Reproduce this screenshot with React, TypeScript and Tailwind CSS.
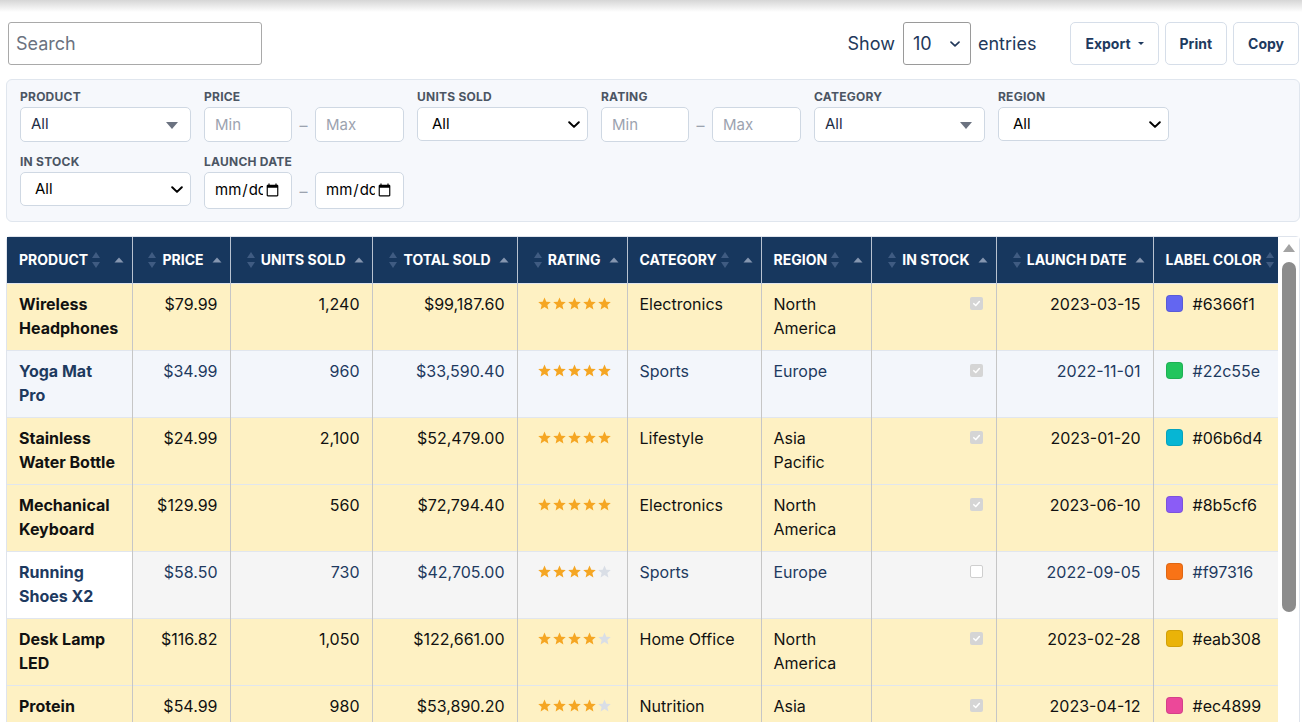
import { ReactNode } from 'react';

type Tone = 'yellow' | 'blue' | 'gray';

type Product = {
  name: string;
  price: string;
  units: string;
  total: string;
  rating: number;
  category: string;
  region: string;
  inStock: boolean;
  launch: string;
  color: string;
  tone: Tone;
};

const products: Product[] = [
  { name: 'Wireless Headphones', price: '$79.99', units: '1,240', total: '$99,187.60', rating: 5, category: 'Electronics', region: 'North America', inStock: true, launch: '2023-03-15', color: '#6366f1', tone: 'yellow' },
  { name: 'Yoga Mat Pro', price: '$34.99', units: '960', total: '$33,590.40', rating: 5, category: 'Sports', region: 'Europe', inStock: true, launch: '2022-11-01', color: '#22c55e', tone: 'blue' },
  { name: 'Stainless Water Bottle', price: '$24.99', units: '2,100', total: '$52,479.00', rating: 5, category: 'Lifestyle', region: 'Asia Pacific', inStock: true, launch: '2023-01-20', color: '#06b6d4', tone: 'yellow' },
  { name: 'Mechanical Keyboard', price: '$129.99', units: '560', total: '$72,794.40', rating: 5, category: 'Electronics', region: 'North America', inStock: true, launch: '2023-06-10', color: '#8b5cf6', tone: 'yellow' },
  { name: 'Running Shoes X2', price: '$58.50', units: '730', total: '$42,705.00', rating: 4, category: 'Sports', region: 'Europe', inStock: false, launch: '2022-09-05', color: '#f97316', tone: 'gray' },
  { name: 'Desk Lamp LED', price: '$116.82', units: '1,050', total: '$122,661.00', rating: 4, category: 'Home Office', region: 'North America', inStock: true, launch: '2023-02-28', color: '#eab308', tone: 'yellow' },
  { name: 'Protein Powder', price: '$54.99', units: '980', total: '$53,890.20', rating: 4, category: 'Nutrition', region: 'Asia Pacific', inStock: true, launch: '2023-04-12', color: '#ec4899', tone: 'yellow' },
  { name: 'Smart Watch S', price: '$199.99', units: '450', total: '$89,995.50', rating: 4, category: 'Electronics', region: 'Europe', inStock: true, launch: '2023-05-22', color: '#0ea5e9', tone: 'yellow' },
  { name: 'Ceramic Mug Set', price: '$29.99', units: '1,500', total: '$44,985.00', rating: 4, category: 'Home Office', region: 'North America', inStock: false, launch: '2022-12-08', color: '#14b8a6', tone: 'gray' },
  { name: 'Trail Backpack', price: '$89.00', units: '620', total: '$55,180.00', rating: 5, category: 'Outdoors', region: 'Europe', inStock: true, launch: '2023-07-01', color: '#ef4444', tone: 'yellow' },
];

type Column = { label: string; width: string; align: 'left' | 'right' | 'center' };

const columns: Column[] = [
  { label: 'Product', width: 'w-[125px]', align: 'left' },
  { label: 'Price', width: 'w-[98px]', align: 'right' },
  { label: 'Units Sold', width: 'w-[142px]', align: 'right' },
  { label: 'Total Sold', width: 'w-[145px]', align: 'right' },
  { label: 'Rating', width: 'w-[110px]', align: 'center' },
  { label: 'Category', width: 'w-[134px]', align: 'left' },
  { label: 'Region', width: 'w-[110px]', align: 'left' },
  { label: 'In Stock', width: 'w-[125px]', align: 'right' },
  { label: 'Launch Date', width: 'w-[157px]', align: 'right' },
  { label: 'Label Color', width: 'w-[150px]', align: 'left' },
];

const SortBoth = ({ className = '' }: { className?: string }) => (
  <svg width="10" height="20" viewBox="0 0 10 20" className={`shrink-0 ${className}`}>
    <path d="M5 2 L9 8 H1 Z" fill="#3f5b82" />
    <path d="M1 12 H9 L5 18 Z" fill="#3f5b82" />
  </svg>
);

const SortUp = ({ className = '' }: { className?: string }) => (
  <svg width="10" height="6" viewBox="0 0 10 6" className={`shrink-0 ${className}`}>
    <path d="M5 0.5 L9.5 5.5 H0.5 Z" fill="#8596b0" />
  </svg>
);

const Star = ({ on }: { on: boolean }) => (
  <svg width="15" height="15" viewBox="0 0 24 24">
    <path
      d="M12 2.5l2.9 6.6 7.1.6-5.4 4.7 1.6 7-6.2-3.8-6.2 3.8 1.6-7L2 9.7l7.1-.6z"
      fill={on ? '#f5a623' : '#d9dee6'}
    />
  </svg>
);

const Chevron = ({ className = '', color = '#000', w = 12 }: { className?: string; color?: string; w?: number }) => (
  <svg width={w} height={w * 0.6} viewBox="0 0 12 7" className={`pointer-events-none absolute ${className}`}>
    <path d="M1.2 1.2 L6 5.8 L10.8 1.2" fill="none" stroke={color} strokeWidth="2" strokeLinecap="round" strokeLinejoin="round" />
  </svg>
);

const FieldLabel = ({ children }: { children: ReactNode }) => (
  <span className="text-[12px] font-bold uppercase leading-4 tracking-[0.02em] text-[#4b5563]">{children}</span>
);

const inputBox = 'h-[35px] rounded-[5px] border border-[#cfd8e3] bg-white text-[15px]';

const TriangleSelect = () => (
  <div className={`relative w-[171px] ${inputBox}`}>
    <select className="h-full w-full appearance-none bg-transparent pl-[10px] text-[#1e2d45] outline-none">
      <option>All</option>
    </select>
    <svg width="12" height="7" viewBox="0 0 12 7" className="pointer-events-none absolute right-[12px] top-[14px]">
      <path d="M0 0 H12 L6 7 Z" fill="#6b7280" />
    </svg>
  </div>
);

const NativeSelect = () => (
  <div className="relative h-[34px] w-[171px] rounded-[5px] border border-[#cfd8e3] bg-white">
    <select className="h-full w-full appearance-none bg-transparent px-[14px] text-[15px] text-black outline-none">
      <option>All</option>
    </select>
    <Chevron className="right-[7px] top-[13px]" />
  </div>
);

const Range = ({ type = 'text' }: { type?: 'text' | 'date' }) => (
  <div className="flex items-center gap-[6px]">
    {type === 'date' ? (
      <input type="date" className="h-[37px] w-[88px] rounded-[5px] border border-[#cfd8e3] bg-white px-[9px] text-[15px] text-black" />
    ) : (
      <input placeholder="Min" className={`w-[88px] px-[10px] placeholder:text-[#9ca3af] ${inputBox}`} />
    )}
    <span className="w-[11px] text-center text-[#9ca3af]">–</span>
    {type === 'date' ? (
      <input type="date" className="h-[37px] w-[89px] rounded-[5px] border border-[#cfd8e3] bg-white px-[9px] text-[15px] text-black" />
    ) : (
      <input placeholder="Max" className={`w-[89px] px-[10px] placeholder:text-[#9ca3af] ${inputBox}`} />
    )}
  </div>
);

const Field = ({ label, children }: { label: string; children: ReactNode }) => (
  <div className="flex flex-col gap-[2px]">
    <FieldLabel>{label}</FieldLabel>
    {children}
  </div>
);

const toneBg: Record<Tone, string> = {
  yellow: 'bg-[#fef1c3]',
  blue: 'bg-[#f3f6fb]',
  gray: 'bg-[#f5f5f5]',
};

const Check = ({ on }: { on: boolean }) =>
  on ? (
    <span className="inline-flex h-[13px] w-[13px] items-center justify-center rounded-[2px] bg-[#d5d5d5] align-middle">
      <svg width="9" height="9" viewBox="0 0 10 10">
        <path d="M2 5.2 L4.2 7.3 L8.2 2.8" fill="none" stroke="#fff" strokeWidth="1.7" strokeLinecap="round" strokeLinejoin="round" />
      </svg>
    </span>
  ) : (
    <span className="inline-block h-[13px] w-[13px] rounded-[2px] border border-[#cfcfcf] bg-white align-middle" />
  );

export default function App() {
  return (
    <div className="h-[722px] overflow-hidden bg-white font-['Inter',sans-serif]">
      <div className="h-[12px] bg-linear-to-b from-[#d6d6d6] to-white" />

      <div className="pl-[6px] pr-[2px]">
        {/* Toolbar */}
        <div className="ml-[2px] mr-[1px] mt-[10px] flex h-[43px] items-center">
          <input
            placeholder="Search"
            className="h-[43px] w-[254px] rounded-[3px] border border-[#a9a9a9] px-[7px] text-[18px] placeholder:text-[#6b7280]"
          />
          <div className="ml-auto flex items-center text-[18px] text-[#22385a]">
            <span>Show</span>
            <div className="relative ml-[8px] h-[43px] w-[68px] rounded-[3px] border border-[#9a9a9a] bg-white">
              <select className="h-full w-full appearance-none bg-transparent px-[9px] text-[18px] text-[#22385a] outline-none">
                <option>10</option>
              </select>
              <Chevron className="right-[10px] top-[18px]" color="#22385a" w={10} />
            </div>
            <span className="ml-[7px]">entries</span>
          </div>
          <div className="ml-[34px] flex gap-[6px] text-[14px] font-bold text-[#1e3a5f]">
            <button className="flex h-[43px] items-center gap-[7px] rounded-[5px] border border-[#d6dee9] bg-white px-[14px]">
              Export
              <svg width="6" height="3" viewBox="0 0 6 3">
                <path d="M0 0 H6 L3 3 Z" fill="#1e3a5f" />
              </svg>
            </button>
            <button className="h-[43px] rounded-[5px] border border-[#d6dee9] bg-white px-[14px]">Print</button>
            <button className="h-[43px] rounded-[5px] border border-[#d6dee9] bg-white px-[14px]">Copy</button>
          </div>
        </div>

        {/* Filters */}
        <div className="mt-[14px] flex flex-wrap gap-x-[13px] gap-y-[12px] rounded-[6px] border border-[#e0e6ee] bg-[#f6f8fc] px-[13px] pb-[12px] pt-[9px]">
          <Field label="Product"><TriangleSelect /></Field>
          <Field label="Price"><Range /></Field>
          <Field label="Units Sold"><NativeSelect /></Field>
          <Field label="Rating"><Range /></Field>
          <Field label="Category"><TriangleSelect /></Field>
          <Field label="Region"><NativeSelect /></Field>
          <Field label="In Stock"><NativeSelect /></Field>
          <Field label="Launch Date"><Range type="date" /></Field>
        </div>

        {/* Table with its scrollbar */}
        <div className="mt-[14px] flex h-[520px] rounded-t-[4px] border border-[#dfe4ec]">
          <div className="min-w-0 flex-1 overflow-hidden">
            <table className="w-[1296px] table-fixed border-collapse">
              <colgroup>
                {columns.map((c) => (
                  <col key={c.label} className={c.width} />
                ))}
              </colgroup>
              <thead>
                <tr>
                  {columns.map((c, i) => (
                    <th
                      key={c.label}
                      className={`h-[46px] bg-[#17375e] pl-[12px] pr-[8px] text-[14px] font-bold uppercase text-white ${
                        i > 0 ? 'border-l border-[#b8c2d0]' : ''
                      }`}
                    >
                      {c.align === 'left' ? (
                        <div className="flex items-center">
                          <span className="whitespace-nowrap">{c.label}</span>
                          <SortBoth className="ml-[3px]" />
                          <span className="flex-1" />
                          <SortUp className="ml-[8px]" />
                        </div>
                      ) : (
                        <div className="flex items-center justify-end">
                          <SortBoth className="mr-[5px]" />
                          <span className="whitespace-nowrap">{c.label}</span>
                          <SortUp className="ml-[8px]" />
                        </div>
                      )}
                    </th>
                  ))}
                </tr>
              </thead>
              <tbody>
                {products.map((p) => {
                  const text = p.tone === 'yellow' ? 'text-[#111111]' : 'text-[#1e3a5f]';
                  const bg = toneBg[p.tone];
                  const cell = `border-l border-t border-l-[#c6c6c6] border-t-[#e1e6ee] px-[12px] pb-[10px] pt-[8px] align-top text-[16px] leading-6 ${bg} ${text}`;
                  return (
                    <tr key={p.name}>
                      <td className={`border-t border-t-[#e1e6ee] px-[12px] pb-[10px] pt-[8px] align-top text-[16px] font-bold leading-6 ${text} ${p.tone === 'gray' ? 'bg-white' : bg}`}>
                        {p.name}
                      </td>
                      <td className={`${cell} text-right`}>{p.price}</td>
                      <td className={`${cell} text-right`}>{p.units}</td>
                      <td className={`${cell} text-right`}>{p.total}</td>
                      <td className={cell}>
                        <div className="flex h-6 items-center justify-center pl-[4px]">
                          {[0, 1, 2, 3, 4].map((n) => (
                            <Star key={n} on={n < p.rating} />
                          ))}
                        </div>
                      </td>
                      <td className={cell}>{p.category}</td>
                      <td className={cell}>{p.region}</td>
                      <td className={`${cell} text-right`}>
                        <span className="mr-px inline-block -translate-y-[2px]">
                          <Check on={p.inStock} />
                        </span>
                      </td>
                      <td className={`${cell} text-right`}>{p.launch}</td>
                      <td className={cell}>
                        <div className="flex items-center gap-[10px]">
                          <span className="h-[17px] w-[17px] shrink-0 rounded-[4px] border border-black/10" style={{ backgroundColor: p.color }} />
                          <span>{p.color}</span>
                        </div>
                      </td>
                    </tr>
                  );
                })}
              </tbody>
            </table>
          </div>

          {/* scrollbar */}
          <div className="flex w-[21px] shrink-0 flex-col items-center bg-white pt-[6px]">
            <svg width="14" height="10" viewBox="0 0 14 10">
              <path d="M7 1 L13 9 H1 Z" fill="#a3a3a3" />
            </svg>
            <div className="mt-[9px] h-[350px] w-[14px] rounded-full bg-[#8c8c8c]" />
          </div>
        </div>
      </div>
    </div>
  );
}
